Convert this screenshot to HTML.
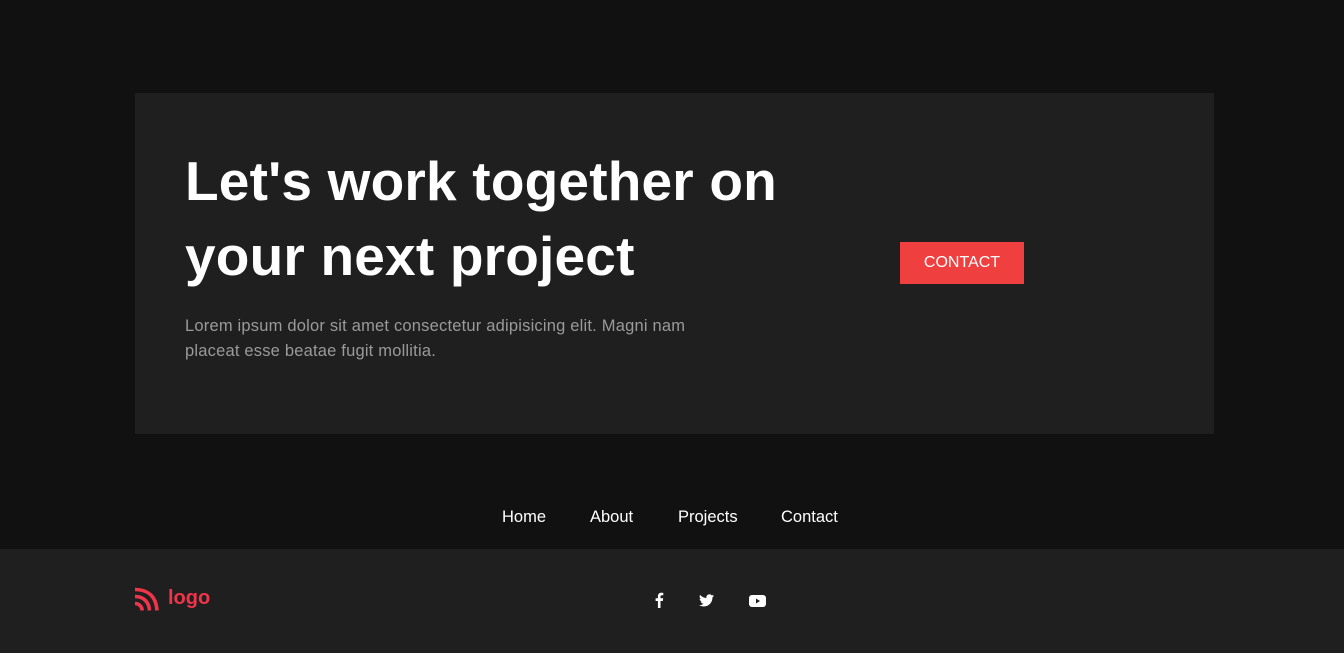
<!DOCTYPE html>
<html><head><meta charset="utf-8"><style>
*{margin:0;padding:0;box-sizing:border-box}
body{width:1344px;height:653px;background:#111;font-family:"Liberation Sans",sans-serif;position:relative;overflow:hidden}
.card{position:absolute;left:135px;top:93px;width:1079px;height:341px;background:#1f1f1f}
h1{position:absolute;left:185px;top:144px;color:#fff;font-size:55px;line-height:75px;font-weight:700;letter-spacing:0.2px;width:700px}
p{position:absolute;left:185px;top:314px;color:#9a9a9a;font-size:16.5px;line-height:25px;width:520px;letter-spacing:0.2px}
.btn{position:absolute;left:900px;top:242px;width:124px;height:42px;background:#ef3f3f;color:#fff;font-size:16px;display:flex;align-items:center;justify-content:center}
nav{position:absolute;top:508px;left:502px;font-size:16.5px;color:#fff;white-space:nowrap}
nav span{position:absolute}
footer{position:absolute;left:0;top:549px;width:1344px;height:104px;background:#1f1f1f}
.logo{position:absolute;left:135px;top:585px;display:flex;align-items:center;color:#f0344a;font-weight:700;font-size:20px}
.soc{position:absolute;top:592px;color:#fff}
</style></head><body>
<div class="card"></div>
<h1>Let's work together on your next project</h1>
<p>Lorem ipsum dolor sit amet consectetur adipisicing elit. Magni nam placeat esse beatae fugit mollitia.</p>
<div class="btn">CONTACT</div>
<nav><span style="left:0">Home</span><span style="left:88px">About</span><span style="left:176px">Projects</span><span style="left:279px">Contact</span></nav>
<footer></footer>
<div class="logo"><svg width="26" height="26" viewBox="0 0 26 26" fill="none" stroke="#f0344a" stroke-width="3.6"><path d="M0 4.5c12 0 21 6 22 21"/><path d="M0 11.5c8 0 14 5 14.5 14"/><path d="M0 18.5c4 0 7 3 7.2 7"/></svg><span style="margin-left:7px;margin-top:0px">logo</span></div>
<svg class="soc" style="left:654px" width="10" height="16" viewBox="0 0 10 16"><path d="M6.5 16V9h2.3l.4-2.7H6.5V4.6c0-.8.3-1.3 1.4-1.3h1.4V.9C9 .8 8.2.7 7.3.7 5.2.7 3.9 2 3.9 4.3v2H1.6V9h2.3v7z" fill="#fff"/></svg>
<svg class="soc" style="left:699px;top:594px" width="15" height="13" viewBox="0 0 24 20"><path d="M24 2.4c-.9.4-1.8.6-2.8.8 1-.6 1.8-1.6 2.2-2.7-1 .6-2 1-3.1 1.2A4.9 4.9 0 0 0 11.9 6 14 14 0 0 1 1.7.9a4.9 4.9 0 0 0 1.5 6.6c-.8 0-1.6-.3-2.2-.6 0 2.4 1.7 4.4 3.9 4.8-.7.2-1.5.2-2.2.1.6 2 2.4 3.4 4.6 3.4A9.9 9.9 0 0 1 0 17.3 14 14 0 0 0 7.5 19.5c9.1 0 14-7.5 14-14v-.6c1-.7 1.8-1.6 2.5-2.5z" fill="#fff"/></svg>
<svg class="soc" style="left:749px;top:595px" width="17" height="12" viewBox="0 0 17 12"><rect width="17" height="12" rx="3" fill="#fff"/><path d="M7 3.5v5l4-2.5z" fill="#1f1f1f"/></svg>
</body></html>
